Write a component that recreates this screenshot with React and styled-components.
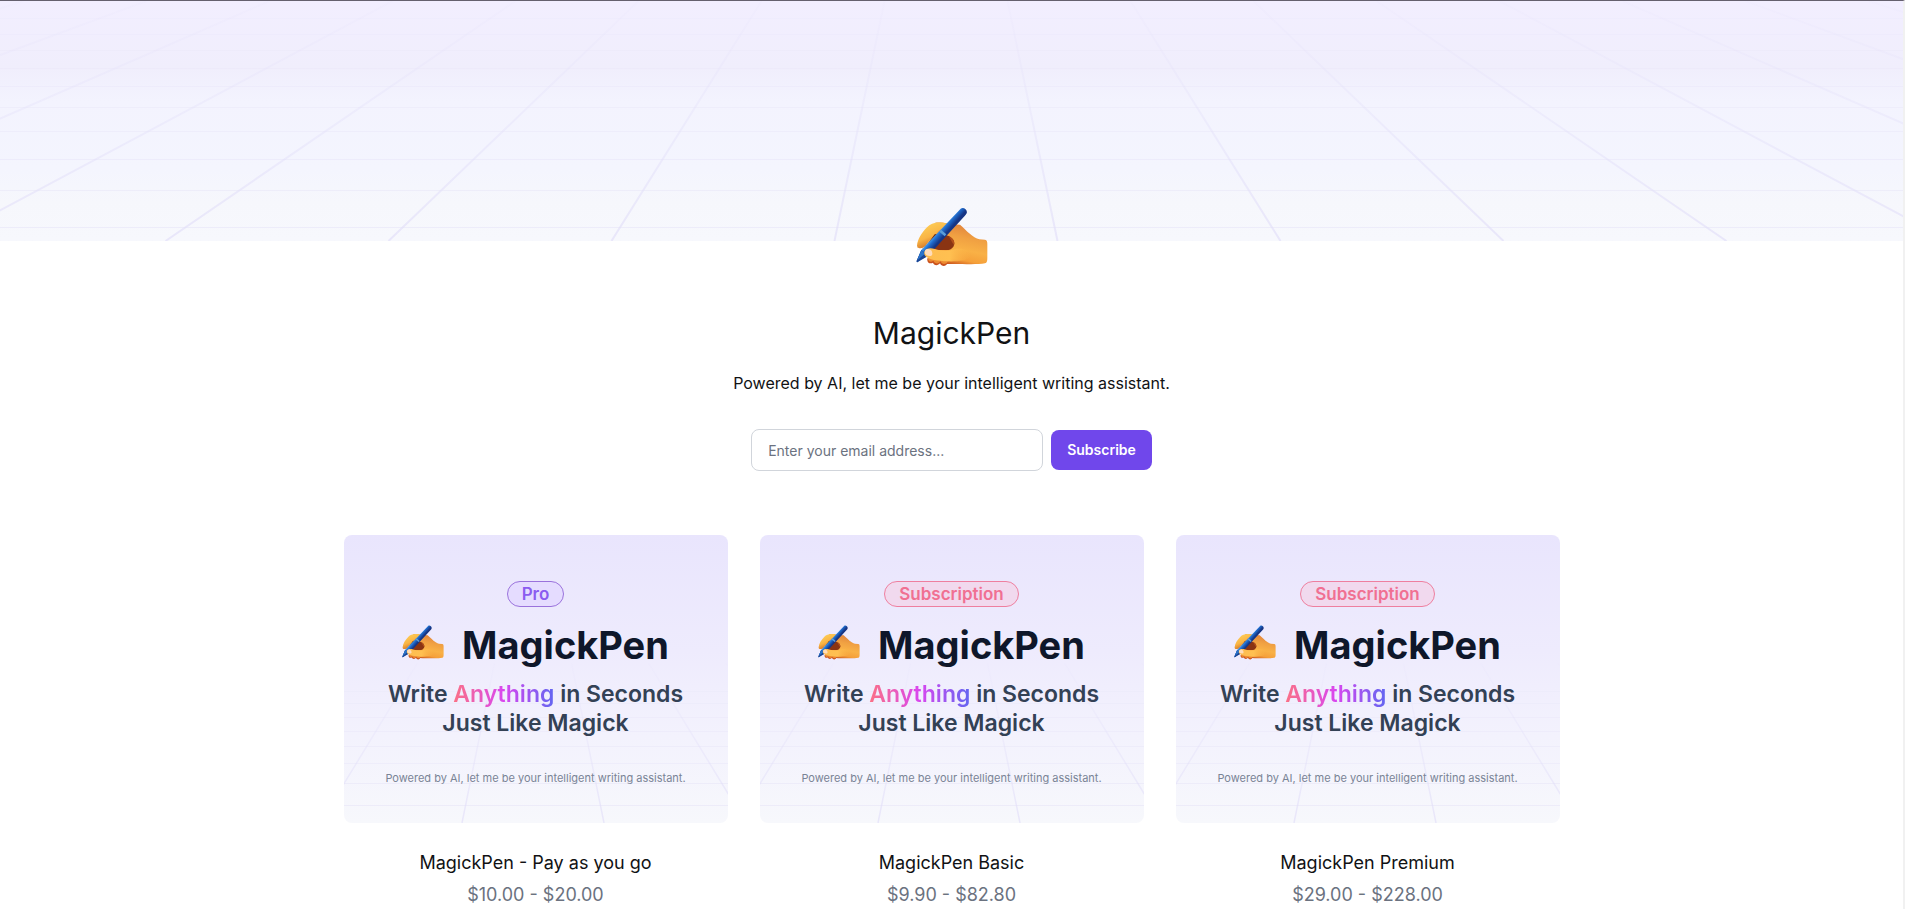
import React, { useId } from "react";
import styled, { createGlobalStyle } from "styled-components";

const GlobalStyle = createGlobalStyle`
  *, *::before, *::after { box-sizing: border-box; }
  body {
    margin: 0;
    background: #fff;
    color: #111214;
    font-family: Inter, "Liberation Sans", sans-serif;
  }
  h1, h2, p { margin: 0; font-weight: 400; }
`;

const Page = styled.div`
  border-top: 1px solid #65606e;
  border-right: 2px solid #f1f1f1;
`;

const Banner = styled.header`
  height: 240px;
  background: linear-gradient(#f2eeff, #f0eefc 28%, #f3f3fe 42%, #f4f5fe 70%, #f6f7fc 84%, #f7f8fd);

  svg { display: block; width: 100%; height: 100%; }
`;

const Profile = styled.section`
  display: flex;
  flex-direction: column;
  align-items: center;
  margin-top: -34px;
  padding: 0 24px;
  text-align: center;
`;

const Avatar = styled.div`
  position: relative;
  width: 72px;
  height: 60px;
`;

const StoreName = styled.h1`
  margin-top: 48px;
  font-size: 30px;
  line-height: 36px;
`;

const Tagline = styled.p`
  margin-top: 20px;
  font-size: 16px;
  line-height: 24px;
`;

const SubscribeForm = styled.form`
  display: flex;
  align-items: center;
  gap: 8px;
  margin-top: 34px;
`;

const EmailInput = styled.input`
  width: 292px;
  height: 42px;
  padding: 0 16px;
  border: 1px solid #d1d5db;
  border-radius: 8px;
  background: #fff;
  color: #111214;
  font: 400 14px/20px Inter, "Liberation Sans", sans-serif;

  &::placeholder { color: #6b7280; opacity: 1; }
`;

const SubscribeButton = styled.button`
  height: 40px;
  padding: 0 16px;
  border: 0;
  border-radius: 8px;
  background: #7047eb;
  color: #fff;
  font: 600 14px/20px Inter, "Liberation Sans", sans-serif;
  cursor: pointer;
`;

const ProductGrid = styled.main`
  display: grid;
  grid-template-columns: repeat(3, minmax(0, 1fr));
  gap: 32px;
  max-width: 1264px;
  margin: 64px auto 0;
  padding: 0 24px;
`;

const Product = styled.a`
  display: block;
  color: inherit;
  text-align: center;
  text-decoration: none;
`;

const Cover = styled.div`
  position: relative;
  aspect-ratio: 4 / 3;
  overflow: hidden;
  border-radius: 8px;
  background: linear-gradient(#e9e5fd, #eeebfd 40%, #f3f2fd 70%, #f7f8fc);
`;

const CoverGrid = styled.svg`
  position: absolute;
  inset: 0;
  width: 100%;
  height: 100%;
`;

const CoverContent = styled.div`
  position: relative;
  display: flex;
  flex-direction: column;
  align-items: center;
  padding-top: 46px;
`;

const Badge = styled.span`
  height: 26px;
  padding: 0 14px;
  border: 1px solid ${(p) => (p.$tone === "pink" ? "#ee7f9f" : "#9a72dc")};
  border-radius: 13px;
  background: ${(p) => (p.$tone === "pink" ? "#f1d9ee" : "#e5dcff")};
  color: ${(p) => (p.$tone === "pink" ? "#f07092" : "#8b5cf0")};
  font-size: 17px;
  font-weight: 600;
  line-height: 24px;
`;

const Brand = styled.div`
  display: flex;
  align-items: center;
  gap: 18px;
  margin-top: 14px;
  color: #0f172a;
  font-size: 38px;
  font-weight: 700;
  line-height: 48px;

  svg { width: 42px; height: 35px; margin-bottom: 6px; }
`;

const Slogan = styled.p`
  margin-top: 11px;
  color: #334155;
  font-size: 23px;
  font-weight: 600;
  line-height: 29px;
`;

const Highlight = styled.span`
  background: linear-gradient(to right, #fb7185, #d946ef 50%, #6366f1);
  background-clip: text;
  -webkit-background-clip: text;
  color: transparent;
`;

const Footnote = styled.p`
  margin-top: 32px;
  color: #7a8496;
  font-size: 11px;
  line-height: 16px;
`;

const ProductName = styled.h2`
  margin-top: 26px;
  font-size: 18px;
  line-height: 28px;
`;

const Price = styled.p`
  margin-top: 4px;
  color: #6b7280;
  font-size: 18px;
  line-height: 28px;
`;

function WritingHand() {
  const id = useId();
  const ref = (name) => `url(#${id}${name})`;
  return (
    <svg viewBox="50 50 216 180" width="100%" height="100%" role="img" aria-label="Writing hand">
      <defs>
        <linearGradient id={id + "palm"} gradientUnits="userSpaceOnUse" x1="200" y1="105" x2="175" y2="225">
          <stop offset="0" stopColor="#e2853c" />
          <stop offset="0.3" stopColor="#f0a042" />
          <stop offset="0.6" stopColor="#f9b146" />
          <stop offset="0.85" stopColor="#f5a03a" />
          <stop offset="1" stopColor="#cf5c1f" />
        </linearGradient>
        <linearGradient id={id + "finger"} x1="0" y1="0" x2="0.5" y2="1">
          <stop offset="0" stopColor="#ffd75e" />
          <stop offset="0.6" stopColor="#f9b444" />
          <stop offset="1" stopColor="#c9651f" />
        </linearGradient>
        <linearGradient id={id + "thumb"} x1="0" y1="0" x2="1" y2="0">
          <stop offset="0" stopColor="#fdbc50" />
          <stop offset="0.55" stopColor="#ffc051" />
          <stop offset="1" stopColor="#fbb448" stopOpacity="0" />
        </linearGradient>
        <linearGradient id={id + "pen"} gradientUnits="userSpaceOnUse" x1="120" y1="120" x2="136" y2="134">
          <stop offset="0" stopColor="#3f97ea" />
          <stop offset="0.35" stopColor="#226ccb" />
          <stop offset="0.7" stopColor="#194fa8" />
          <stop offset="1" stopColor="#173584" />
        </linearGradient>
      </defs>
      <path fill={ref("palm")} d="M108 97C130 94 150 103 182 103C200 119 221 143 240 147L257 148C263 149 264 154 264 162L264 202C264 212 263 217 257 219C235 223 200 221 160 221C115 222 85 207 82 193L92 140Z" />
      <path fill="#c9501c" d="M84 204C82 217 92 222 101 217C103 226 116 227 122 219C126 229 140 230 144 219L150 208Z" />
      <path fill="#ec8a31" d="M86 201C85 213 94 218 102 211C106 221 118 222 123 213C128 223 139 223 146 214L165 208L120 190Z" />
      <path fill="#8a3413" d="M130 133C149 133 166 145 165 160C164 169 157 177 147 179L88 179Z" />
      <path fill="#b34f1a" d="M148 137C160 142 168 154 164 164C158 156 153 146 148 137Z" />
      <path fill={ref("finger")} d="M53 166C55 146 67 127 83 111C94 98 112 94 138 98C148 101 147 108 136 112C121 117 112 124 104 135C94 148 84 158 78 168C72 175 58 174 55 172Z" />
      <path fill="#6f2d14" d="M78 168C88 158 96 145 106 132L119 130L82 174L66 177C72 175 75 172 78 168Z" />
      <path fill={ref("pen")} d="M184 55C192 49 206 58 202 69C201 71 199 74 196 77L86 197L54 216C50 214 52 211 53 209L66 179Z" />
      <path fill="#1b4593" d="M66 179L53 209C52 212 51 215 54 216L65 207L85 196Z" />
      <path fill="#2a74cb" d="M66 179L54 210L77 190Z" />
      <path fill="#5a9dd8" d="M125 118L141 132L136 138L120 124Z" />
      <path fill={ref("thumb")} d="M76 183C80 174 91 171 107 176C125 181 145 184 168 176C192 172 215 180 214 194C212 212 168 214 145 213C115 212 87 208 78 197C74 192 74 187 76 183Z" />
      <path fill="#ffdcba" d="M77 181C82 173 95 176 98 184C101 193 98 197 91 197C81 197 74 190 77 181Z" />
    </svg>
  );
}

/* Floor grid: rays spread from a point above, crossed by horizon lines. */
function PerspectiveGrid({ width, height, center, top, topStep, bottomStep, rays, rows, stroke }) {
  const id = useId();
  const half = Array.from({ length: rays }, (_, i) => i + 0.5);
  return (
    <>
      <defs>
        <linearGradient id={id + "fade"} gradientUnits="userSpaceOnUse" x1="0" y1={top} x2="0" y2={height}>
          <stop offset="0" stopColor="#dfdbf8" stopOpacity="0.08" />
          <stop offset="0.45" stopColor="#dfdbf8" stopOpacity="0.3" />
          <stop offset="1" stopColor="#dfdbf8" stopOpacity="0.6" />
        </linearGradient>
      </defs>
      <g fill="none" stroke={`url(#${id}fade)`} strokeWidth={stroke}>
        {half.flatMap((k) =>
          [-k, k].map((n) => (
            <path key={n} d={`M${center + n * topStep} ${top}L${center + n * bottomStep} ${height}`} />
          ))
        )}
      </g>
      {rows.map((y) => (
        <rect key={y} x="0" y={y} width={width} height="1" fill="#e2dff6" opacity={0.1 + (0.4 * (y - top)) / (height - top)} />
      ))}
    </>
  );
}

const products = [
  { name: "MagickPen - Pay as you go", price: "$10.00 - $20.00", badge: "Pro", tone: "violet" },
  { name: "MagickPen Basic", price: "$9.90 - $82.80", badge: "Subscription", tone: "pink" },
  { name: "MagickPen Premium", price: "$29.00 - $228.00", badge: "Subscription", tone: "pink" },
];

function ProductCard({ name, price, badge, tone }) {
  return (
    <Product href="#">
      <Cover>
        <CoverGrid viewBox="0 0 384 288" preserveAspectRatio="none" aria-hidden="true">
          <PerspectiveGrid
            width={384}
            height={288}
            center={189}
            top={128}
            topStep={77}
            bottomStep={142}
            rays={3}
            rows={[156, 168, 182, 196, 211, 228, 248, 270]}
            stroke={1.5}
          />
        </CoverGrid>
        <CoverContent>
          <Badge $tone={tone}>{badge}</Badge>
          <Brand>
            <WritingHand />
            <span>MagickPen</span>
          </Brand>
          <Slogan>
            Write <Highlight>Anything</Highlight> in Seconds
            <br />
            Just Like Magick
          </Slogan>
          <Footnote>Powered by AI, let me be your intelligent writing assistant.</Footnote>
        </CoverContent>
      </Cover>
      <ProductName>{name}</ProductName>
      <Price>{price}</Price>
    </Product>
  );
}

export default function App() {
  return (
    <Page>
      <GlobalStyle />
      <Banner>
        <svg viewBox="0 0 1903 240" preserveAspectRatio="none" aria-hidden="true">
          <PerspectiveGrid
            width={1903}
            height={240}
            center={946}
            top={0}
            topStep={123}
            bottomStep={223}
            rays={9}
            rows={[17, 33, 49, 67, 85, 106, 130, 158, 189, 226]}
            stroke={2}
          />
        </svg>
      </Banner>
      <Profile>
        <Avatar>
          <WritingHand />
        </Avatar>
        <StoreName>MagickPen</StoreName>
        <Tagline>Powered by AI, let me be your intelligent writing assistant.</Tagline>
        <SubscribeForm onSubmit={(e) => e.preventDefault()}>
          <EmailInput type="email" aria-label="Email address" placeholder="Enter your email address..." />
          <SubscribeButton type="submit">Subscribe</SubscribeButton>
        </SubscribeForm>
      </Profile>
      <ProductGrid>
        {products.map((p) => (
          <ProductCard key={p.name} {...p} />
        ))}
      </ProductGrid>
    </Page>
  );
}
